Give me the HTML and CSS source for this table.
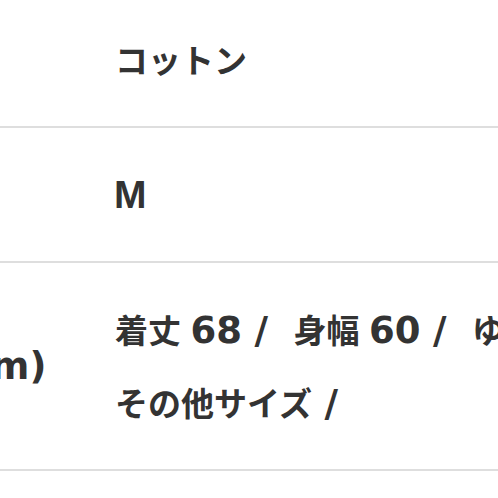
FILE: index.html
```html
<!DOCTYPE html>
<html lang="ja">
<head>
<meta charset="utf-8">
<title>商品詳細</title>
<link rel="stylesheet" href="styles.css">
</head>
<body>
<div class="spec">
  <div class="row">
    <div class="label">素材</div>
    <div class="value"><div class="line">コットン</div></div>
  </div>
  <div class="row">
    <div class="label">サイズ</div>
    <div class="value"><div class="line"><span class="lat size">M</span></div></div>
  </div>
  <div class="row">
    <div class="label">実寸<span class="lat">(cm)</span></div>
    <div class="value">
      <div class="line">着丈 <span class="lat num">68</span> <span class="lat sep">/</span> 身幅 <span class="lat num">60</span> <span class="lat sep">/</span> ゆき丈 <span class="lat num">80</span> <span class="lat sep">/</span></div>
      <div class="line">その他サイズ <span class="lat sep">/</span></div>
    </div>
  </div>
</div>
</body>
</html>
```
FILE: styles.css
```css
html, body {
  margin: 0;
  padding: 0;
  background: #ffffff;
  overflow: hidden;
}
body {
  width: 498px;
  height: 498px;
  font-family: "Noto Sans CJK JP", "Noto Sans", sans-serif;
  font-weight: 700;
  font-size: 33px;
  color: #333333;
}
.spec {
  margin-top: -7px;
  margin-left: -110px;
  width: 900px;
}
.row {
  display: grid;
  grid-template-columns: 225px 1fr;
  border-bottom: 2px solid #dedede;
  padding: 30px 0;
}
.label {
  display: flex;
  align-items: center;
  white-space: nowrap;
  line-height: 73px;
  margin-left: -4px;
}
.value {
  display: flex;
  flex-direction: column;
}
.line {
  white-space: nowrap;
  line-height: 73px;
  height: 73px;
}
.lat {
  font-family: "DejaVu Sans", "Liberation Sans", sans-serif;
  font-size: 37px;
}
.size {
  font-family: "Liberation Sans", Arial, sans-serif;
  font-size: 39px;
  margin-left: -1px;
}
.num {
  margin-left: 2px;
}
.sep {
  margin-left: 5px;
  margin-right: 18px;
}
```
